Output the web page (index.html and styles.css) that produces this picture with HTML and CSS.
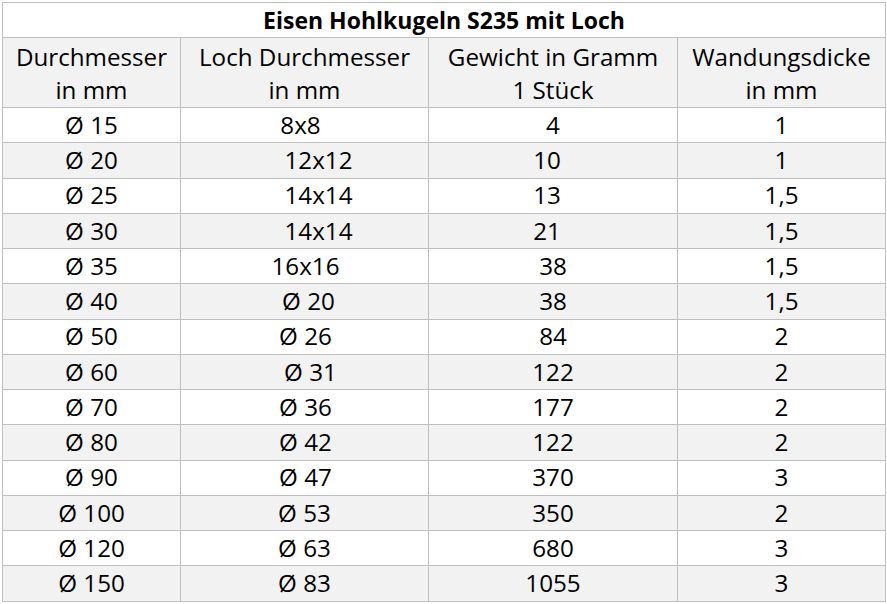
FILE: index.html
```html
<!DOCTYPE html>
<html lang="de">
<head>
<meta charset="utf-8">
<title>Eisen Hohlkugeln S235 mit Loch</title>
<link rel="stylesheet" href="styles.css">
</head>
<body>
<div class="sheet">
<table class="spec">
  <colgroup>
    <col class="c1"><col class="c2"><col class="c3"><col class="c4">
  </colgroup>
  <thead>
    <tr class="title-row"><th colspan="4" class="title">Eisen Hohlkugeln S235 mit Loch</th></tr>
    <tr class="head-row alt">
      <th>Durchmesser<br>in mm</th>
      <th>Loch Durchmesser<br>in mm</th>
      <th>Gewicht in Gramm<br>1 Stück</th>
      <th>Wandungsdicke<br>in mm</th>
    </tr>
  </thead>
  <tbody>
    <tr><td>Ø 15</td><td class="pr8">8x8</td><td>4</td><td>1</td></tr>
    <tr class="alt"><td>Ø 20</td><td class="pl28">12x12</td><td class="pr12">10</td><td>1</td></tr>
    <tr><td>Ø 25</td><td class="pl28">14x14</td><td class="pr12">13</td><td>1,5</td></tr>
    <tr class="alt"><td>Ø 30</td><td class="pl28">14x14</td><td class="pr12">21</td><td>1,5</td></tr>
    <tr><td>Ø 35</td><td class="pl2">16x16</td><td>38</td><td>1,5</td></tr>
    <tr class="alt"><td>Ø 40</td><td class="pl8">Ø 20</td><td>38</td><td>1,5</td></tr>
    <tr><td>Ø 50</td><td class="pl2">Ø 26</td><td>84</td><td>2</td></tr>
    <tr class="alt"><td>Ø 60</td><td class="pl12">Ø 31</td><td>122</td><td>2</td></tr>
    <tr><td>Ø 70</td><td class="pl2">Ø 36</td><td>177</td><td>2</td></tr>
    <tr class="alt"><td>Ø 80</td><td class="pl2">Ø 42</td><td>122</td><td>2</td></tr>
    <tr><td>Ø 90</td><td class="pl2">Ø 47</td><td>370</td><td>3</td></tr>
    <tr class="alt"><td>Ø 100</td><td>Ø 53</td><td>350</td><td>2</td></tr>
    <tr><td>Ø 120</td><td>Ø 63</td><td>680</td><td>3</td></tr>
    <tr class="alt"><td>Ø 150</td><td>Ø 83</td><td>1055</td><td>3</td></tr>
  </tbody>
</table>
</div>
</body>
</html>
```

FILE: styles.css
```css
html, body {
  margin: 0;
  padding: 0;
  background: #ffffff;
}

.sheet {
  padding: 2px 0 0 2px;
}

.spec {
  border-collapse: collapse;
  table-layout: fixed;
  width: 883px;
  font-family: "Open Sans", "Noto Sans", sans-serif;
  font-size: 24.2px;
  color: #000000;
}

.c1 { width: 178px; }
.c2 { width: 248px; }
.c3 { width: 249px; }
.c4 { width: 208px; }

.spec th,
.spec td {
  border: 1px solid #bfbfbf;
  padding: 0 0 1px 0;
  text-align: center;
  vertical-align: bottom;
  font-weight: 400;
  line-height: 32.5px;
  height: 35.25px;
  box-sizing: border-box;
  white-space: nowrap;
}

.spec .title {
  font-weight: 700;
  font-size: 23px;
  height: 35px;
  padding-bottom: 1px;
}

.head-row th {
  height: 70px;
}

.alt {
  background: #f2f2f2;
}

.spec .pr8 { padding-right: 8px; }
.spec .pr12 { padding-right: 12px; }
.spec .pl2 { padding-left: 2px; }
.spec .pl8 { padding-left: 8px; }
.spec .pl12 { padding-left: 12px; }
.spec .pl28 { padding-left: 28px; }
```
